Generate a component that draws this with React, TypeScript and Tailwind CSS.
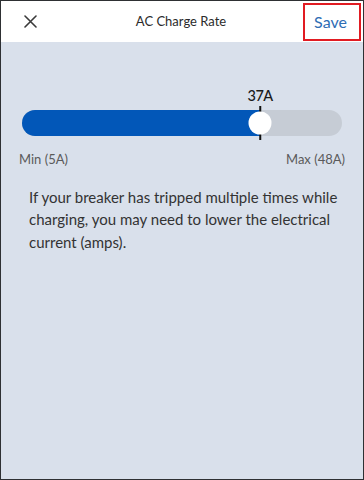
import React from 'react';

// AC charge rate settings screen

const FONT = { fontFamily: 'Lato, "Noto Sans", Arial, sans-serif' };

export default function App() {
  const min = 5;
  const max = 48;
  const value = 37;
  const pct = ((value - min) / (max - min)) * 100;

  return (
    <div
      className="w-[364px] h-[480px] border border-[#2e3033] bg-[#d9e0eb] flex flex-col overflow-hidden"
      style={FONT}
    >
      {/* Header */}
      <div className="h-[41px] bg-white flex items-center relative shrink-0">
        <button className="w-[58px] h-full flex items-center justify-center text-[#333]">
          <svg width="13" height="13" viewBox="0 0 13 13" fill="none">
            <path d="M1 1L12 12M12 1L1 12" stroke="#3a3a3a" strokeWidth="1.6" strokeLinecap="round" />
          </svg>
        </button>
        <div className="flex-1 text-center text-[13px] text-[#2b2b2b]">AC Charge Rate</div>
        <div className="w-[60px] h-full flex items-center justify-end pr-[2px]">
          <div className="h-[38px] w-[58px] border-2 border-[#e11b22] flex items-center justify-center pr-[3px] text-[16px] text-[#2e6db4]">
            Save
          </div>
        </div>
      </div>

      {/* Slider */}
      <div className="px-[21px] pt-[68px]">
        <div className="relative h-[26px]">
          <div className="absolute inset-0 rounded-full bg-[#c6ccd5]" />
          <div
            className="absolute left-0 top-0 bottom-0 rounded-l-full bg-[#0257b8]"
            style={{ width: `${pct}%` }}
          />
          <div
            className="absolute top-[-4px] bottom-[-4px] w-[1.5px] bg-[#111] -translate-x-1/2"
            style={{ left: `${pct}%` }}
          />
          <div
            className="absolute top-1/2 w-[23px] h-[23px] rounded-full bg-white -translate-x-1/2 -translate-y-1/2"
            style={{ left: `${pct}%` }}
          />
          <div
            className="absolute top-[-25px] -translate-x-1/2 text-[14.5px] font-medium text-[#1a1a1a] tracking-[-0.5px]"
            style={{ left: `${pct}%` }}
          >
            {value}A
          </div>
        </div>
        <div className="flex justify-between mt-[14px] -mx-[3px] text-[13px] text-[#5a5a5a]">
          <span>Min ({min}A)</span>
          <span>Max ({max}A)</span>
        </div>
      </div>

      {/* Info text */}
      <p className="pl-[28px] pr-[4px] mt-[16px] text-[15px] leading-[22.5px] text-[#333]">
        If your breaker has tripped multiple times while charging, you may need to lower the electrical current (amps).
      </p>
    </div>
  );
}
